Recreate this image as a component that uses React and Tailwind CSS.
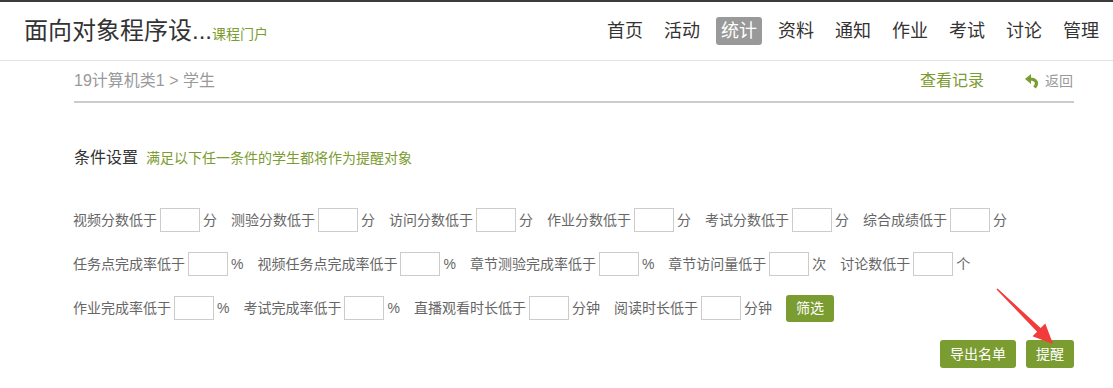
import React from 'react';

const font = { fontFamily: '"Liberation Sans", "Noto Sans CJK SC", sans-serif' };

const navItems = ['首页', '活动', '统计', '资料', '通知', '作业', '考试', '讨论', '管理'];

const rows = [
    [['视频分数低于', '分'], ['测验分数低于', '分'], ['访问分数低于', '分'], ['作业分数低于', '分'], ['考试分数低于', '分'], ['综合成绩低于', '分']],
    [['任务点完成率低于', '%'], ['视频任务点完成率低于', '%'], ['章节测验完成率低于', '%'], ['章节访问量低于', '次'], ['讨论数低于', '个']],
    [['作业完成率低于', '%'], ['考试完成率低于', '%'], ['直播观看时长低于', '分钟'], ['阅读时长低于', '分钟']],
];

const Field = ({ label, unit }) => (
    <div className="flex items-center mr-[14px]">
        <span className="text-[14px] leading-[24px] text-[#666] whitespace-nowrap">{label}</span>
        <input type="text" className="w-[40px] h-[24px] mx-[3px] border border-[#ccc] bg-white outline-none" />
        <span className="text-[14px] leading-[24px] text-[#666] whitespace-nowrap">{unit}</span>
    </div>
);

const GreenButton = ({ children, className = '' }) => (
    <button className={`px-[10px] bg-[#7b9c30] text-white text-[14px] rounded-[3px] leading-none ${className}`}>
        {children}
    </button>
);

const App = () => {
    return (
        <div className="relative w-[1113px] h-[388px] overflow-hidden bg-white border-t-2 border-[#3c3c3c]" style={font}>
            {/* header */}
            <div className="h-[59px] flex items-center border-b border-[#e3e3e3]">
                <div className="pl-[24px] flex items-baseline">
                    <span className="text-[24px] leading-none text-[#333]">面向对象程序设...</span>
                    <span className="text-[14px] leading-none text-[#7b9c30]">课程门户</span>
                </div>
                <div className="ml-auto pr-[9px] flex items-center gap-[11px]">
                    {navItems.map(item => (
                        <span
                            key={item}
                            className={`px-[5px] h-[28px] flex items-center text-[18px] leading-none rounded-[3px] ${item === '统计' ? 'bg-[#999] text-white' : 'text-[#333]'}`}
                        >
                            {item}
                        </span>
                    ))}
                </div>
            </div>

            <div className="ml-[74px] w-[1000px]">
                {/* breadcrumb */}
                <div className="h-[42px] flex items-center border-b-2 border-[#ccc]">
                    <span className="text-[16px] leading-none text-[#999]">19计算机类1 &gt; 学生</span>
                    <span className="ml-auto text-[16px] leading-none text-[#7b9c30]">查看记录</span>
                    <span className="ml-[41px] mr-[1px] flex items-center gap-[6px] text-[14px] leading-none text-[#999]">
                        <svg width="14" height="15" viewBox="0 0 14 15">
                            <polygon points="0,5 6,0 6,10" fill="#7b9c30" />
                            <path d="M5 5 C11 5 13.5 9 9.5 13.5" stroke="#7b9c30" strokeWidth="3.2" fill="none" />
                        </svg>
                        返回
                    </span>
                </div>

                {/* conditions */}
                <div className="mt-[45px] h-[20px] flex items-center">
                    <span className="text-[16px] leading-none text-[#333]">条件设置</span>
                    <span className="ml-[8px] text-[14px] leading-none text-[#7b9c30]">满足以下任一条件的学生都将作为提醒对象</span>
                </div>

                <div className="mt-[40px] flex flex-col gap-[20px] -ml-[1px]">
                    {rows.map((row, i) => (
                        <div key={i} className="h-[24px] flex items-center">
                            {row.map(([label, unit]) => (
                                <Field key={label} label={label} unit={unit} />
                            ))}
                            {i === 2 && <GreenButton className="h-[27px]">筛选</GreenButton>}
                        </div>
                    ))}
                </div>

                <div className="mt-[20px] flex justify-end gap-[10px]">
                    <GreenButton className="h-[28px]">导出名单</GreenButton>
                    <GreenButton className="h-[28px]">提醒</GreenButton>
                </div>
            </div>

            {/* annotation arrow */}
            <svg className="absolute left-0 top-0 pointer-events-none" width="1113" height="388">
                <polygon
                    points="996.5,287.5 1037.1,329.7 1032.5,334.3 1053,342 1045.3,321.5 1040.7,326.1 997.5,286.5"
                    fill="#f23b3b"
                />
            </svg>
        </div>
    );
};

export default App;
